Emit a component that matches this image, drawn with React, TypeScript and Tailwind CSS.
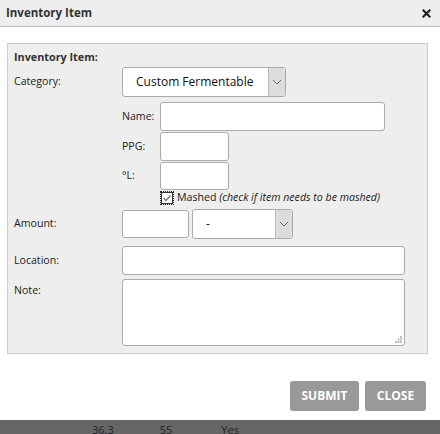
import React from 'react';

function Chevron() {
  return (
    <svg width="10" height="6" viewBox="0 0 10 6" fill="none">
      <path d="M1 1l4 4 4-4" stroke="#666" strokeWidth="1" />
    </svg>
  );
}

function FakeSelect({ value, className }: { value: string; className: string }) {
  return (
    <div className={`flex overflow-hidden rounded-[3px] border border-[#aaa] bg-white ${className}`}>
      <div className="flex flex-1 items-center pl-[13px] text-[12px] text-[#111]">{value}</div>
      <div className="flex w-[17px] items-center justify-center border-l border-[#bbb] bg-[#ddd]">
        <Chevron />
      </div>
    </div>
  );
}

export default function App() {
  const label = 'w-[108px] shrink-0 text-[10.6px] text-[#222]';
  const sub = 'w-[38px] text-[10.6px] text-[#222]';
  const input = 'rounded-[3px] border border-[#aaa] bg-white';

  return (
    <div
      className="relative flex h-[434px] w-[440px] flex-col overflow-hidden bg-white"
      style={{ fontFamily: '"Open Sans", "DejaVu Sans", sans-serif' }}
    >
      {/* Dialog title bar */}
      <div className="flex h-[27px] shrink-0 items-center justify-between border-b border-[#bbb] bg-[#eee] pl-[6px] pr-[9px]">
        <span className="text-[11.5px] font-bold text-[#333]">Inventory Item</span>
        <svg width="9" height="9" viewBox="0 0 9 9">
          <path d="M1.5 1.5l6 6M7.5 1.5l-6 6" stroke="#222" strokeWidth="2.2" strokeLinecap="square" />
        </svg>
      </div>

      <div className="px-[7px] pt-[16px]">
        <div className="flex h-[311px] w-[421px] flex-col border border-[#ccc] bg-[#eee] pl-[6px] pt-[5px]">
          <div className="text-[10.8px] font-bold text-[#333]">Inventory Item:</div>

          <div className="mt-[2px] flex items-center">
            <span className={label}>Category:</span>
            <FakeSelect value="Custom Fermentable" className="h-[30px] w-[164px]" />
          </div>

          <div className="mt-[5px] flex items-center pl-[108px]">
            <span className={sub}>Name:</span>
            <div className={`${input} h-[29px] w-[225px]`} />
          </div>
          <div className="mt-[1px] flex items-center pl-[108px]">
            <span className={sub}>PPG:</span>
            <div className={`${input} h-[29px] w-[69px]`} />
          </div>
          <div className="mt-[1px] flex items-center pl-[108px]">
            <span className={sub}>°L:</span>
            <div className={`${input} h-[28px] w-[69px]`} />
          </div>
          <div className="mt-[1px] flex h-[14px] items-center pl-[146px]">
            <div className="flex h-[14px] w-[14px] items-center justify-center border border-dotted border-[#222]">
              <svg width="12" height="12" viewBox="0 0 12 12">
                <rect x="0.5" y="0.5" width="11" height="11" fill="#fff" stroke="#333" />
                <path d="M2.5 6l2.5 2.5 4.5-5" stroke="#777" strokeWidth="1.3" fill="none" />
              </svg>
            </div>
            <span className="ml-[3px] text-[10.6px] text-[#222]">
              Mashed <i>(check if item needs to be mashed)</i>
            </span>
          </div>

          <div className="mt-[4px] flex items-center">
            <span className={label}>Amount:</span>
            <div className={`${input} h-[28px] w-[67px]`} />
            <FakeSelect value="-" className="ml-[3px] h-[30px] w-[101px]" />
          </div>

          <div className="mt-[7px] flex items-center">
            <span className={label}>Location:</span>
            <div className={`${input} h-[29px] w-[283px]`} />
          </div>

          <div className="mt-[4px] flex items-start">
            <span className={`${label} pt-[4px]`}>Note:</span>
            <div className={`${input} relative h-[67px] w-[283px]`}>
              <svg className="absolute bottom-[2px] right-[2px]" width="7" height="7" viewBox="0 0 7 7">
                <rect x="5" y="0" width="2" height="2" fill="#bbb" />
                <rect x="2.5" y="2.5" width="2" height="2" fill="#bbb" />
                <rect x="5" y="2.5" width="2" height="2" fill="#bbb" />
                <rect x="0" y="5" width="2" height="2" fill="#bbb" />
                <rect x="2.5" y="5" width="2" height="2" fill="#bbb" />
                <rect x="5" y="5" width="2" height="2" fill="#bbb" />
              </svg>
            </div>
          </div>
        </div>
      </div>

      {/* Buttons */}
      <div className="mt-[27px] flex justify-end gap-[6px] pr-[14px]">
        <button className="h-[30px] w-[69px] rounded-[3px] bg-[#999] text-[12px] font-bold text-white">SUBMIT</button>
        <button className="h-[30px] w-[61px] rounded-[3px] bg-[#999] text-[12px] font-bold text-white">CLOSE</button>
      </div>

      {/* Page content behind the dialog */}
      <div className="mt-auto flex h-[14px] items-end overflow-hidden bg-[#666] text-[11px] leading-[14px] text-[#222]">
        <span className="ml-[92px] translate-y-[3px]">36.3</span>
        <span className="ml-[46px] translate-y-[3px]">55</span>
        <span className="ml-[49px] translate-y-[3px]">Yes</span>
      </div>
    </div>
  );
}
